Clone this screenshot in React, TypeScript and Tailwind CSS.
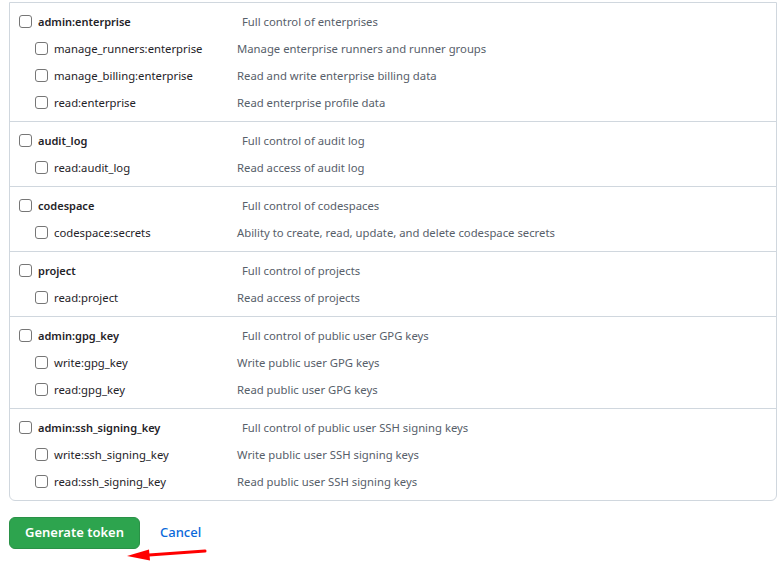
import React from "react";

type Scope = { name: string; desc: string; subs: { name: string; desc: string }[] };

const groups: Scope[] = [
  {
    name: "admin:enterprise",
    desc: "Full control of enterprises",
    subs: [
      { name: "manage_runners:enterprise", desc: "Manage enterprise runners and runner groups" },
      { name: "manage_billing:enterprise", desc: "Read and write enterprise billing data" },
      { name: "read:enterprise", desc: "Read enterprise profile data" },
    ],
  },
  {
    name: "audit_log",
    desc: "Full control of audit log",
    subs: [{ name: "read:audit_log", desc: "Read access of audit log" }],
  },
  {
    name: "codespace",
    desc: "Full control of codespaces",
    subs: [{ name: "codespace:secrets", desc: "Ability to create, read, update, and delete codespace secrets" }],
  },
  {
    name: "project",
    desc: "Full control of projects",
    subs: [{ name: "read:project", desc: "Read access of projects" }],
  },
  {
    name: "admin:gpg_key",
    desc: "Full control of public user GPG keys",
    subs: [
      { name: "write:gpg_key", desc: "Write public user GPG keys" },
      { name: "read:gpg_key", desc: "Read public user GPG keys" },
    ],
  },
  {
    name: "admin:ssh_signing_key",
    desc: "Full control of public user SSH signing keys",
    subs: [
      { name: "write:ssh_signing_key", desc: "Write public user SSH signing keys" },
      { name: "read:ssh_signing_key", desc: "Read public user SSH signing keys" },
    ],
  },
];

function Box() {
  return <span className="w-[13px] h-[13px] shrink-0 rounded-[3px] border border-[#767676] bg-white" />;
}

export default function App() {
  return (
    <div
      className="w-[782px] h-[569px] bg-white overflow-hidden text-[11.3px] text-[#1f2328]"
      style={{ fontFamily: '"Noto Sans", "Liberation Sans", sans-serif' }}
    >
      <div className="ml-[9px] w-[768px] mt-[2px] border border-[#d0d7de] rounded-b-[6px]">
        {groups.map((g, i) => (
          <div key={g.name} className={`py-[5px] ${i > 0 ? "border-t border-[#d0d7de]" : ""}`}>
            <div className="h-[27px] flex items-center">
              <div className="w-[232px] flex items-center pl-[9px] gap-[6px]">
                <Box />
                <span className="font-semibold text-[11px] pt-[2px]">{g.name}</span>
              </div>
              <span className="text-[#57606a] pt-[2px]">{g.desc}</span>
            </div>
            {g.subs.map((s) => (
              <div key={s.name} className="h-[27px] flex items-center">
                <div className="w-[227px] flex items-center pl-[25px] gap-[6px]">
                  <Box />
                  <span className="pt-[2px]">{s.name}</span>
                </div>
                <span className="text-[#57606a] pt-[2px]">{s.desc}</span>
              </div>
            ))}
          </div>
        ))}
      </div>
      <div className="relative ml-[9px] mt-[16px] flex items-center gap-[20px]">
        <button className="h-[32px] w-[131px] rounded-[6px] bg-[#2da44e] text-white font-semibold text-[13px] border border-[#2a9147]">
          Generate token
        </button>
        <span className="text-[#0969da] text-[13px] font-medium">Cancel</span>
        <svg className="absolute left-[110px] top-[28px]" width="100" height="16" viewBox="0 0 100 16">
          <line x1="86" y1="6" x2="30" y2="10" stroke="#ff0000" strokeWidth="3" strokeLinecap="round" />
          <polygon points="8,11 30,4.5 31,15.5" fill="#ff0000" />
        </svg>
      </div>
    </div>
  );
}
